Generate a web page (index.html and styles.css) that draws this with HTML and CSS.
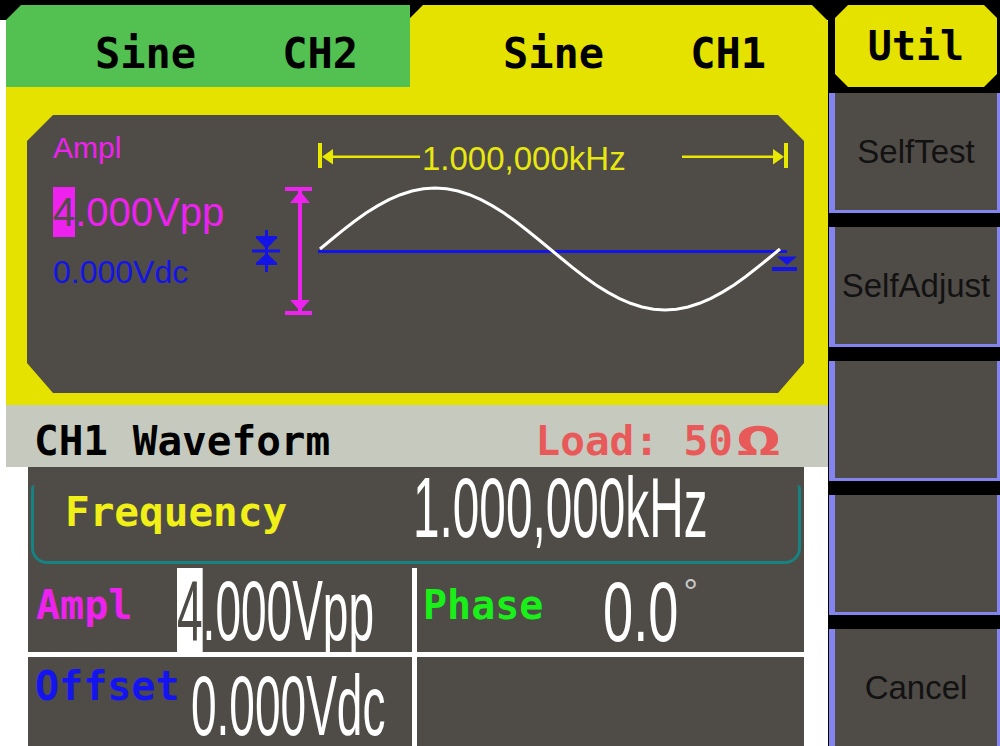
FILE: index.html
```html
<!DOCTYPE html>
<html>
<head>
<meta charset="utf-8">
<link rel="stylesheet" href="styles.css">
</head>
<body>
<div class="screen">
  <div class="main">
    <div class="tabs">
      <div class="tab tab-ch2"><span>Sine</span><span class="ch">CH2</span></div>
      <div class="tab tab-ch1"><span>Sine</span><span class="ch">CH1</span></div>
    </div>
    <div class="stage">
      <div class="display">
        <div class="readout">
          <div class="r-label">Ampl</div>
          <div class="r-ampl"><span class="r-cursor">4</span>.000Vpp</div>
          <div class="r-offset">0.000Vdc</div>
        </div>
        <svg class="plot" width="552" height="278" viewBox="0 0 552 278">
          <g fill="#e8e800">
            <rect x="66" y="28" width="4" height="25"/>
            <polygon points="70,41.75 81,34 81,49.5"/>
            <rect x="81" y="40.5" width="87" height="2.5"/>
            <rect x="430" y="40.5" width="92" height="2.5"/>
            <polygon points="532,41.75 521,34 521,49.5"/>
            <rect x="532" y="28" width="4" height="25"/>
          </g>
          <text class="plot-freq" x="170" y="55">1.000,000kHz</text>
          <g fill="#ee22ee">
            <rect x="33" y="72" width="27" height="4"/>
            <polygon points="48,76 38,88 58,88"/>
            <rect x="46" y="76" width="4" height="122"/>
            <polygon points="38,185 58,185 48,196"/>
            <rect x="33" y="196" width="27" height="4"/>
          </g>
          <g fill="#1414e6">
            <rect x="13" y="115" width="3" height="42"/>
            <rect x="4" y="121" width="21" height="3"/>
            <polygon points="4,123 25,123 14.5,134"/>
            <rect x="0" y="134.5" width="28" height="3"/>
            <polygon points="4,148 25,148 14.5,138"/>
            <rect x="4" y="147" width="21" height="3"/>
            <rect x="66" y="135" width="469" height="3"/>
            <polygon points="525,141.5 545,141.5 535,150"/>
            <rect x="520" y="152" width="25" height="4"/>
          </g>
          <polyline class="wave" points="68,134 79.5,124.5 91,115.2 102.5,106.3 114,98.1 125.5,90.9 137,84.7 148.5,79.7 160,76 171.5,73.8 183,73 194.5,73.8 206,76 217.5,79.7 229,84.7 240.5,90.9 252,98.1 263.5,106.3 275,115.2 286.5,124.5 298,134 309.5,143.5 321,152.8 332.5,161.7 344,169.9 355.5,177.1 367,183.3 378.5,188.3 390,192 401.5,194.2 413,195 424.5,194.2 436,192 447.5,188.3 459,183.3 470.5,177.1 482,169.9 493.5,161.7 505,152.8 516.5,143.5 528,134"/>
        </svg>
      </div>
    </div>
    <div class="status">
      <span class="status-title">CH1 Waveform</span>
      <span class="load">Load: 50<span class="ohm"><span class="ohm-glyph">Ω</span></span></span>
    </div>
    <div class="lower">
      <div class="freq">
        <div class="freq-box">
          <span class="freq-label">Frequency</span>
          <span class="big freq-value">1.000,000kHz</span>
        </div>
      </div>
      <div class="params">
        <div class="cell">
          <span class="p-label p-ampl">Ampl</span>
          <span class="big ampl-value"><span class="cursor">4</span>.000Vpp</span>
        </div>
        <div class="cell cell-right">
          <span class="p-label p-phase">Phase</span>
          <span class="phase-wrap"><span class="big phase-value">0.0</span></span>
          <span class="degree">°</span>
        </div>
        <div class="cell">
          <span class="p-label p-offset">Offset</span>
          <span class="big offset-value">0.000Vdc</span>
        </div>
        <div class="cell cell-right"></div>
      </div>
    </div>
  </div>
  <div class="menu">
    <div class="util">Util</div>
    <div class="buttons">
      <div class="btn">SelfTest</div>
      <div class="btn">SelfAdjust</div>
      <div class="btn"></div>
      <div class="btn"></div>
      <div class="btn">Cancel</div>
    </div>
  </div>
</div>
</body>
</html>
```

FILE: styles.css
```css
html, body {
  margin: 0;
  padding: 0;
}
body {
  width: 1000px;
  height: 746px;
  overflow: hidden;
  background: #ffffff;
}
.screen {
  display: flex;
  width: 1000px;
  height: 746px;
}
.main {
  width: 828px;
  flex: none;
  background: linear-gradient(#000 0 20px, #fff 20px);
}

/* tabs */
.tabs {
  display: flex;
  height: 87px;
  padding-top: 5px;
  margin-left: 6px;
  box-sizing: border-box;
}
.tab {
  height: 82px;
  box-sizing: border-box;
  padding-top: 28px;
  font-family: "DejaVu Sans Mono", monospace;
  font-weight: bold;
  font-size: 42px;
  line-height: 42px;
  color: #000;
  white-space: nowrap;
}
.tab .ch {
  margin-left: 86px;
}
.tab-ch2 {
  width: 404px;
  background: #52c152;
  padding-left: 89px;
  clip-path: polygon(0 15px, 15px 0, 100% 0, 100% 100%, 0 100%);
}
.tab-ch1 {
  flex: 1;
  background: #e6e200;
  padding-left: 93px;
  clip-path: polygon(0 13px, 13px 0, calc(100% - 16px) 0, 100% 16px, 100% 100%, 0 100%);
}

/* waveform stage */
.stage {
  width: 822px;
  height: 318px;
  margin-left: 6px;
  box-sizing: border-box;
  padding: 28px 24px 12px 21px;
  background: #e6e200;
}
.display {
  height: 278px;
  display: flex;
  background: #4f4b47;
  clip-path: polygon(26px 0, calc(100% - 26px) 0, 100% 26px, 100% calc(100% - 30px), calc(100% - 26px) 100%, 26px 100%, 0 calc(100% - 30px), 0 26px);
}
.readout {
  width: 225px;
  flex: none;
  box-sizing: border-box;
  padding-left: 26px;
  font-family: "Liberation Sans", Arial, sans-serif;
  white-space: nowrap;
}
.r-label {
  margin-top: 18px;
  font-size: 30px;
  line-height: 30px;
  color: #ee22ee;
}
.r-ampl {
  margin-top: 24px;
  font-size: 40px;
  line-height: 50px;
  height: 50px;
  color: #ee22ee;
}
.r-cursor {
  display: inline-block;
  height: 50px;
  background: #ee22ee;
  color: #4f4b47;
}
.r-offset {
  margin-top: 19px;
  font-size: 32px;
  line-height: 32px;
  color: #1414e6;
}
.plot {
  display: block;
  flex: none;
}
.plot-freq {
  font-family: "Liberation Sans", Arial, sans-serif;
  font-size: 33px;
  fill: #e8e810;
}
.wave {
  fill: none;
  stroke: #ffffff;
  stroke-width: 3;
  stroke-linejoin: miter;
}

/* status bar */
.status {
  width: 822px;
  height: 62px;
  margin-left: 6px;
  box-sizing: border-box;
  padding: 10px 45px 0 28px;
  display: flex;
  justify-content: space-between;
  background: #c6cabe;
  font-family: "DejaVu Sans Mono", monospace;
  font-weight: bold;
  font-size: 41px;
  line-height: 52px;
  white-space: nowrap;
}
.status-title {
  color: #000;
}
.load {
  color: #e85a5a;
}
.ohm {
  display: inline-block;
  width: 50px;
  text-align: left;
}
.ohm-glyph {
  display: inline-block;
  transform: scaleX(1.9);
  transform-origin: 0 0;
  margin-left: 2px;
}

/* lower parameter panel */
.lower {
  width: 776px;
  height: 279px;
  margin-left: 28px;
  background: #4f4b47;
  overflow: hidden;
}
.freq {
  height: 101px;
  box-sizing: border-box;
  padding: 18px 3px 4px 3px;
}
.freq-box {
  height: 79px;
  box-sizing: border-box;
  border: 3px solid #168282;
  border-top: 0;
  border-radius: 4px 4px 16px 16px;
  display: flex;
  align-items: flex-start;
  padding-left: 31px;
}
.freq-label {
  margin-top: 7px;
  font-family: "DejaVu Sans Mono", monospace;
  font-weight: bold;
  font-size: 41px;
  line-height: 41px;
  color: #f0f018;
  white-space: nowrap;
}
.big {
  display: inline-block;
  flex: none;
  font-family: "Liberation Sans", Arial, sans-serif;
  font-size: 86px;
  line-height: 84px;
  color: #ffffff;
  white-space: nowrap;
  transform-origin: 0 0;
}
.freq-value {
  margin-left: 126px;
  margin-top: -9px;
  line-height: 62px;
  transform: scaleX(0.555);
}
.params {
  display: grid;
  grid-template-columns: 384px 387px;
  grid-template-rows: 84px 90px;
  gap: 5px;
  background: #ffffff;
}
.cell {
  background: #4f4b47;
  display: flex;
  align-items: flex-start;
  overflow: hidden;
}
.p-label {
  font-family: "DejaVu Sans Mono", monospace;
  font-weight: bold;
  font-size: 40px;
  line-height: 40px;
  white-space: nowrap;
}
.p-ampl {
  color: #ee22ee;
  margin: 17px 0 0 8px;
}
.p-phase {
  color: #18f018;
  margin: 17px 0 0 6px;
}
.p-offset {
  color: #1414f0;
  margin: 9px 0 0 7px;
}
.ampl-value {
  margin-left: 45px;
  transform: scaleX(0.535);
}
.cursor {
  display: inline-block;
  background: #ffffff;
  color: #4f4b47;
}
.phase-wrap {
  width: 77px;
  flex: none;
  margin-left: 60px;
}
.phase-value {
  line-height: 82px;
  margin-top: 2px;
  transform: scaleX(0.63);
}
.degree {
  margin: 7px 0 0 3px;
  font-family: "Liberation Sans", Arial, sans-serif;
  font-size: 36px;
  line-height: 36px;
  color: #c8c8c8;
}
.offset-value {
  margin-left: 11px;
  margin-top: 6px;
  transform: scaleX(0.535);
}

/* right menu */
.menu {
  width: 172px;
  flex: none;
  background: #000;
  padding-top: 5px;
  box-sizing: border-box;
}
.util {
  height: 82px;
  margin: 0 3px 6px 7px;
  background: #e6e200;
  clip-path: polygon(13px 0, calc(100% - 13px) 0, 100% 13px, 100% calc(100% - 13px), calc(100% - 13px) 100%, 13px 100%, 0 calc(100% - 13px), 0 13px);
  font-family: "DejaVu Sans Mono", monospace;
  font-weight: bold;
  font-size: 40px;
  line-height: 82px;
  text-align: center;
  color: #000;
}
.buttons {
  display: flex;
  flex-direction: column;
  gap: 14px;
}
.btn {
  height: 120px;
  flex: none;
  box-sizing: border-box;
  margin-left: 1px;
  border-left: 6px solid #8484f0;
  border-right: 3px solid #8484f0;
  border-bottom: 3px solid #8484f0;
  background: #4f4b47;
  display: flex;
  align-items: center;
  justify-content: center;
  font-family: "Liberation Sans", Arial, sans-serif;
  font-size: 33px;
  color: #121212;
  white-space: nowrap;
}
```
